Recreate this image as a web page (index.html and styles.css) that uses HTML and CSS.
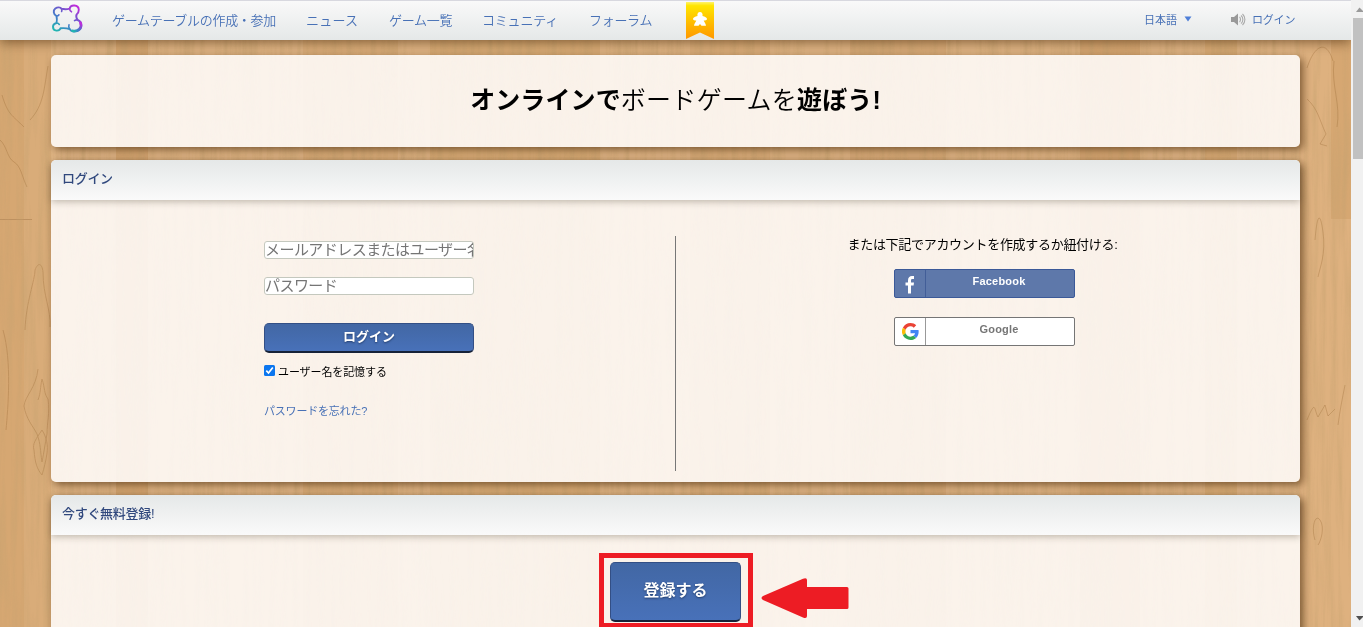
FILE: index.html
```html
<!DOCTYPE html>
<html lang="ja">
<head>
<meta charset="utf-8">
<title>ログイン</title>
<link rel="stylesheet" href="styles.css">
</head>
<body>
<div class="page">
  <svg class="wood" width="1351" height="627" aria-hidden="true">
    <defs>
      <filter id="grain" x="0" y="0" width="100%" height="100%">
        <feTurbulence type="fractalNoise" baseFrequency="0.16 0.008" numOctaves="4" seed="8"/>
        <feColorMatrix values="0 0 0 0 .56  0 0 0 0 .36  0 0 0 0 .16  1.1 0 0 0 -.43"/>
      </filter>
    </defs>
    <rect width="1351" height="627" fill="#e0b584"/>
    <g fill="#c79558" opacity=".4">
      <rect width="24" height="627"/><rect x="24" width="27" height="627" opacity=".6"/>
      <rect x="116" width="32" height="627"/><rect x="303" width="95" height="627" opacity=".5"/>
      <rect x="430" width="170" height="627" opacity=".7"/><rect x="690" width="80" height="627" opacity=".5"/>
      <rect x="850" width="96" height="627" opacity=".6"/><rect x="1080" width="60" height="627"/>
      <rect x="1205" width="32" height="627" opacity=".7"/><rect x="1299" width="52" height="627" opacity=".25"/><rect x="1331" width="20" height="219"/>
      <rect y="219" width="32" height="1" fill="#8a5a28"/>
    </g>
    <rect width="1351" height="627" filter="url(#grain)"/>
    <g class="knot">
      <path d="M38 400c3-8 2-12 4-21 3 9 2 15 6 20 2 15-1 22-1 35-2 10-3 18-5 28-2-12-1-17-5-28-4-8-11-15-13-28 1-10 12-18 14-37M34 450c-2-6 2-11 8-20 5 8 6 16 5 23-1 8-3 15-5 22-5-6-7-12-8-25z"/>
      <path d="M25 330c1-28 10-50 10-60 3-8 7-7 8 2 0 24 8 37 7 55M2 95c6 20 10 20 22 32M0 140c7 6 7 18 14 22s8 15 13 25M30 120c14-15 14-32 18-54M3 330c9 31 5 78 3 100"/>
      <path d="M1307 420c9-22 7-10 11-3l7-12 3 11 7-7M1315 540c-4-12 0-27 5-20s1 21-2 25M1307 68c7-22 19-30 26-7M1307 99c11 10 12 20 19 35l-6 10 7 2M1334 61c-3 25 7 43 3 66M1315 240c2-25 5-30 8-8s-3 35-5 45M1345 385c-3 15-5 25-7 40"/>
    </g>
  </svg>

  <header class="topbar">
    <svg class="logo" width="34" height="30" viewBox="0 0 34 30" aria-hidden="true">
      <defs><linearGradient id="lg" x1="0.05" y1=".95" x2="0.8" y2="0"><stop offset="0" stop-color="#1fb8b0"/><stop offset=".35" stop-color="#3f7fc8"/><stop offset=".7" stop-color="#7753cf"/><stop offset="1" stop-color="#c02adb"/></linearGradient></defs>
      <g fill="none" stroke="url(#lg)" stroke-linecap="round" stroke-linejoin="round">
        <path stroke-width="1.900" d="M10.500 4.800Q15 5.800 18.600 4.600C19.500.2 27.600.3 27.800 5.800C27.800 8.500 26.600 9.800 25.600 10.500Q24.500 13 26.600 16C31.500 17.500 32 25 26.500 27C23 28.500 19.800 27 18.600 25Q14.500 23.800 9.500 24.300C8.500 27.500 2 27.800 2 22.800C2 20.500 3.500 19.500 5.500 19Q6.300 15.500 5.500 12C2.200 10 2 6.500 4.300 4.600C6.500 2.800 9.500 3 10.500 4.800Z"/>
        <path stroke-width="1.600" d="M10.500 4.800Q11.200 6.500 10.600 7.500M18.600 4.600Q18.600 7 20.500 7.800M5.500 12Q7.200 12 8 10.800M5.500 19Q7.500 19.200 8.300 20.500M18.600 25Q17.200 23 18 20.800M26.600 16Q25 15.600 23.500 16.600"/>
        <path stroke-width="2.600" d="M29.300 18.500C31.600 23.500 27.500 28 21.500 26.800"/>
      </g>
    </svg>
    <nav class="nav">
      <a class="n1">ゲームテーブルの作成・参加</a><a class="n2">ニュース</a><a class="n3">ゲーム一覧</a><a class="n4">コミュニティ</a><a class="n5">フォーラム</a>
    </nav>
    <svg class="ribbon" width="28" height="37" viewBox="0 0 28 37" aria-hidden="true">
      <defs><linearGradient id="rg" x2="0" y2="1"><stop offset="0" stop-color="#fff36c"/><stop offset=".1" stop-color="#ffe500"/><stop offset=".65" stop-color="#ffb400"/><stop offset="1" stop-color="#ff9800"/></linearGradient></defs>
      <path d="M0 0h28v37L14 30.500 0 37z" fill="url(#rg)"/>
      <path d="M14 10c-2 0-3 2-2.500 4C9 14.500 7 15.500 7 17c0 1.200 1.800 1.500 3.300 1.500C9.800 20 8 22 8 23.800h4.500L14 22l1.500 1.800H20c0-1.800-1.800-3.800-2.300-5.300 1.500 0 3.300-.3 3.300-1.500 0-1.500-2-2.500-4.500-3 .5-2-.5-4-2.500-4z" fill="#fff"/>
    </svg>
    <div class="lang">日本語</div>
    <svg class="caret" width="8" height="6" aria-hidden="true"><path d="M.5 .5h7L4 5.500z" fill="#4f7fd8"/></svg>
    <svg class="speaker" width="15" height="13" viewBox="0 0 15 13" aria-hidden="true"><path d="M0 4h3l4-3.500v12L3 9H0z" fill="#999"/><path d="M8.500 4c1.300 1 1.300 4 0 5M10 2.500c2.500 2 2.500 6 0 8M11.500 1c3.200 3 3.200 8 0 11" fill="none" stroke="#aaa" stroke-width="1.100"/></svg>
    <a class="signin">ログイン</a>
  </header>

  <main class="content">
    <section class="card hero"><h1><b>オンラインで</b><span>ボードゲームを</span><b class="last">遊ぼう!</b></h1></section>

    <section class="card login">
      <h2 class="card-head">ログイン</h2>
      <div class="login-body">
        <form class="form">
          <div class="field">メールアドレスまたはユーザー名</div>
          <div class="field second">パスワード</div>
          <div class="btn submit">ログイン</div>
          <div class="remember">
            <svg width="11" height="11" aria-hidden="true"><rect width="11" height="11" rx="1.500" fill="#0b76ef"/><path d="M2.300 5.700 4.500 8l4.300-5.500" fill="none" stroke="#fff" stroke-width="1.700"/></svg>
            <span>ユーザー名を記憶する</span>
          </div>
          <a class="forgot">パスワードを忘れた?</a>
        </form>
        <div class="social">
          <p>または下記でアカウントを作成するか紐付ける:</p>
          <div class="provider facebook">
            <div class="mark"><svg width="10" height="18" viewBox="0 0 10 18" aria-hidden="true"><path d="M3 17.500V9.500H.5v-3H3V4.500C3 1.500 4.500 0 7 0h2v3H7.500C6.300 3 6 3.500 6 4.500v2h3l-.4 3H6v8z" fill="#fff"/></svg></div>
            <div class="name">Facebook</div>
          </div>
          <div class="provider google">
            <div class="mark"><svg width="17" height="17" viewBox="0 0 48 48" aria-hidden="true"><path fill="#EA4335" d="M24 9.500c3.500 0 6.700 1.200 9.200 3.600l6.900-6.900C35.900 2.400 30.500 0 24 0 14.600 0 6.500 5.400 2.600 13.200l8 6.200C12.400 13.700 17.700 9.500 24 9.500z"/><path fill="#4285F4" d="M47 24.500c0-1.600-.2-3.100-.4-4.500H24v9h12.900c-.6 3-2.300 5.500-4.800 7.200l7.700 6C44.400 38 47 31.800 47 24.500z"/><path fill="#FBBC05" d="M10.500 28.600a14.500 14.500 0 0 1 0-9.200l-8-6.200a24 24 0 0 0 0 21.600z"/><path fill="#34A853" d="M24 48c6.500 0 11.900-2.100 15.900-5.800l-7.700-6c-2.200 1.500-4.900 2.300-8.200 2.300-6.300 0-11.600-4.200-13.500-9.900l-8 6.200C6.500 42.600 14.600 48 24 48z"/></svg></div>
            <div class="name">Google</div>
          </div>
        </div>
      </div>
    </section>

    <section class="card register">
      <h2 class="card-head">今すぐ無料登録!</h2>
      <div class="register-body"><div class="btn signup">登録する</div></div>
    </section>
  </main>
  <div class="highlight"></div>
  <svg class="arrow" width="88" height="41" viewBox="0 0 88 41" aria-hidden="true"><path d="M2 18 42 .8Q46-.5 46 2V9h40q1.500 0 1.500 1.500v19q0 1.500-1.500 1.500H46v7q0 3-4 1.500L2 22Q-1 20 2 18z" fill="#ed1c24"/></svg>
</div>
<div class="scrollbar">
  <svg width="10" height="18" aria-hidden="true"><path d="M3 12h8L6.500 7.500z" fill="#9a9a9a"/></svg>
  <div class="thumb"></div>
  <svg class="down" width="10" height="12" aria-hidden="true"><path d="M3 1h8L6.500 5.500z" fill="#505050"/></svg>
</div>
</body>
</html>
```
FILE: styles.css
```css
* { box-sizing: border-box; }
html, body { height: 627px; overflow: hidden; }
body { margin: 0; display: flex; font-family: "Liberation Sans", "Noto Sans CJK JP", sans-serif; color: #000; }
h1, h2, p { margin: 0; font-weight: normal; }
.page { position: relative; width: 1351px; height: 627px; overflow: hidden; flex: none; }
.wood { position: absolute; inset: 0; }
.knot { fill: none; stroke: #93632f; stroke-width: 1; opacity: .3; }

.topbar { position: relative; display: flex; align-items: flex-start; height: 40px; padding-left: 51px; border-top: 1px solid #d8d8df; background: linear-gradient(#f9f9f9, #e5e8e8); box-shadow: 0 2px 12px rgba(60, 30, 0, .6); color: #4871b6; white-space: nowrap; }
.logo { margin-top: 3px; flex: none; }
.nav { display: flex; margin-left: 27px; font-size: 13px; line-height: 20px; padding-top: 10px; font-weight: 350; flex: none; }
.nav a { flex: none; }
.n1 { width: 194px; letter-spacing: -.3px; }
.n2 { width: 83px; letter-spacing: .2px; }
.n3 { width: 93px; letter-spacing: -.3px; }
.n4 { width: 107px; letter-spacing: -.2px; }
.n5 { width: 97px; letter-spacing: -.3px; }
.ribbon { margin-top: 1px; flex: none; }
.lang { width: 40px; margin-left: 430px; padding-top: 10px; font-size: 11px; line-height: 18px; flex: none; }
.caret { margin-top: 15px; flex: none; }
.speaker { margin: 12px 0 0 39px; flex: none; }
.signin { margin-left: 6px; padding-top: 10px; font-size: 11px; line-height: 18px; letter-spacing: -.2px; }

.content { position: relative; display: flex; flex-direction: column; gap: 13px; width: 1249px; margin: 15px 0 0 51px; }
.card { border-radius: 5px; background: rgba(254, 251, 248, .89); box-shadow: 3px 3px 8px rgba(60, 30, 0, .6); flex: none; }
.hero { height: 92px; padding-top: 27px; text-align: center; }
.hero h1 { font-size: 25px; line-height: 36px; letter-spacing: .1px; white-space: nowrap; }
.hero span { font-weight: 350; letter-spacing: .3px; }
.hero b { font-weight: 700; }
.card-head { height: 40px; padding: 9px 11px; border-radius: 5px 5px 0 0; background: linear-gradient(#e5e8e8, #fafafa); box-shadow: 0 2px 7px rgba(60, 50, 30, .3); color: #30487d; font-size: 13px; line-height: 20px; font-weight: 500; letter-spacing: -.3px; }
.login { height: 322px; }
.login-body { display: flex; height: 271px; padding-top: 36px; }
.form { width: 625px; padding: 5px 0 0 213px; border-right: 1px solid #777; }
.field { width: 210px; height: 18px; border: 1px solid #c4c8be; border-radius: 3px; background: #fff; color: #757575; font-size: 15px; font-weight: 400; line-height: 16px; letter-spacing: -.55px; white-space: nowrap; overflow: hidden; }
.second { margin-top: 18px; }
.btn { border: 1px solid #334f85; border-bottom: 2px solid #162238; border-radius: 5px; background: linear-gradient(#4267a4, #4871b9); color: #fff; font-weight: 700; text-align: center; text-shadow: 0 1px 2px #233d6b; }
.submit { width: 210px; height: 30px; margin-top: 28px; font-size: 13px; line-height: 25px; }
.remember { display: flex; gap: 3px; height: 18px; margin-top: 9px; font-size: 11px; line-height: 20px; letter-spacing: -.1px; }
.remember svg { margin-top: 3px; }
.forgot { display: block; margin-top: 22px; color: #4871b6; font-size: 11px; font-weight: 400; line-height: 18px; letter-spacing: -.2px; }
.social { flex: 1; display: flex; flex-direction: column; align-items: center; padding-right: 7px; }
.social p { height: 33px; margin-right: 4px; font-size: 13px; line-height: 17px; letter-spacing: -.3px; white-space: nowrap; }
.provider { display: flex; width: 181px; height: 29px; border: 1px solid #3b5998; border-radius: 2px; background: #5e78aa; color: #fff; font-size: 11px; font-weight: 700; }
.mark { display: flex; align-items: center; justify-content: center; width: 31px; border-right: 1px solid #425e98; }
.facebook .mark { padding-top: 2px; }
.name { flex: 1; padding-right: 2px; text-align: center; line-height: 23px; letter-spacing: .2px; }
.google { margin-top: 19px; border-color: #757575; background: #fff; color: #757575; }
.google .mark { border-right: 1px solid #999; }
.register { height: 180px; }
.register-body { padding: 27px 0 0 559px; }
.signup { width: 131px; height: 60px; font-size: 16px; line-height: 56px; }
.highlight { position: absolute; left: 599px; top: 553px; width: 154px; height: 75px; border: 5px solid #ed1c24; }
.arrow { position: absolute; left: 761px; top: 578px; }

.scrollbar { display: flex; flex-direction: column; width: 12px; height: 627px; padding-left: 2px; background: #f1f1f1; }
.thumb { height: 141px; background: #c1c1c1; flex: none; }
.down { margin-top: auto; }
```
